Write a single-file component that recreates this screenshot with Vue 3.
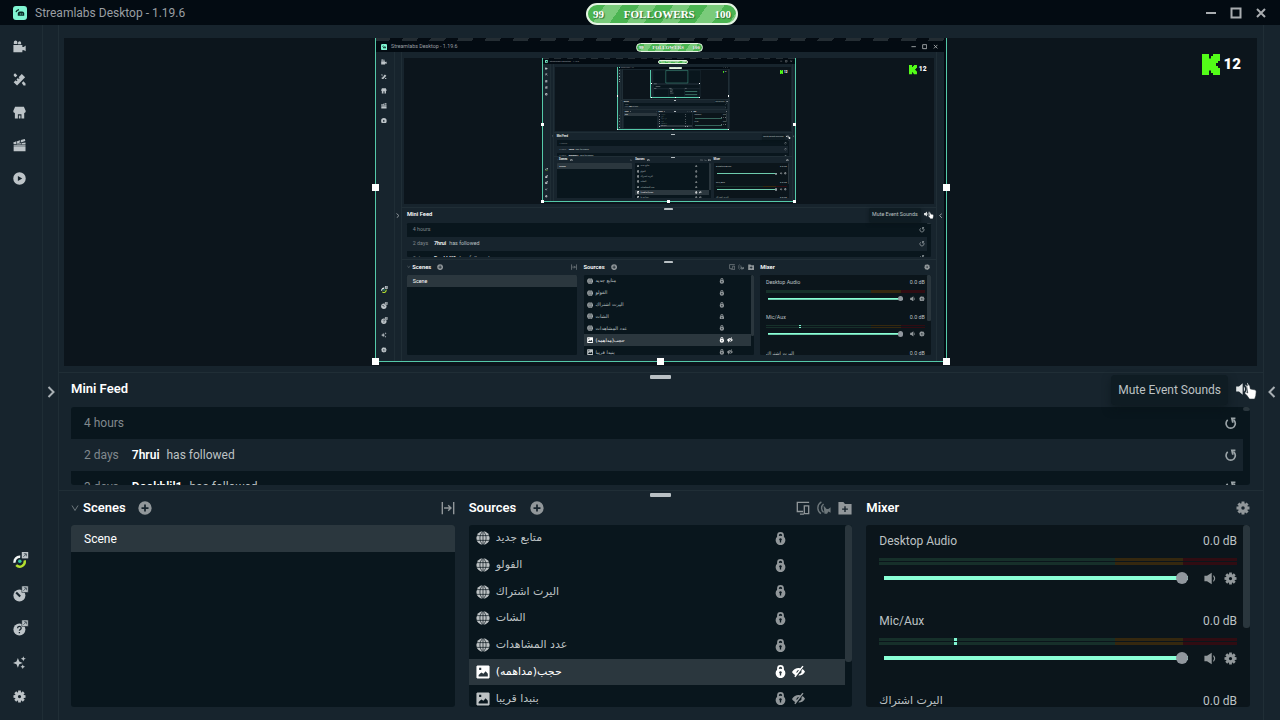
<script setup>
import { computed, ref } from 'vue'

const props = defineProps({
  depth: { type: Number, default: 0 }
})

const MAX_DEPTH = 3
const nested = computed(() => props.depth > 0)
const showCapture = computed(() => props.depth < MAX_DEPTH)

function gearPath() {
  const points = []
  for (let i = 0; i < 8; i++) {
    const a = (i * Math.PI) / 4
    for (const [r, da] of [[5.6, -0.32], [7.6, -0.22], [7.6, 0.22], [5.6, 0.32]]) {
      points.push(`${(8 + r * Math.sin(a + da)).toFixed(2)} ${(8 - r * Math.cos(a + da)).toFixed(2)}`)
    }
  }
  return `M${points.join('L')}ZM8 6a2 2 0 1 0 0 4a2 2 0 0 0 0-4z`
}

const icons = {
  camera: 'M.5 6h11v9.2H.5zM12 9.5l3.6-2.6v7L12 11.6zM1 2.8a2.2 2.2 0 0 1 4.4 0V5H1zM6.2 3.4a1.9 1.9 0 0 1 3.8 0V5.2H6.2zM11 8.500h2v4h-2z',
  tools: 'M.8 11.4 3.4 8.8l1.2 1.2.9-.9-1.2-1.2L6 6.200l1.200 1.200.9-.9L6.900 5.300 10.800 1.200 14.900 5.200 5 15.300zM1 1.600 2.600.4 5.300 3 3.300 5.200 1 3.600zM10.800 12.200l2-2L15.400 13v2.500h-2.400z',
  store: 'M2.600 1h10.800l2.300 5.200c0 1.500-.9 2.300-1.900 2.300V15.300H2.300V8.500C1.200 8.500.3 7.700.3 6.200zM6 15.300h1.200v-3.600h2V15.300h1.200V10H6z',
  clapper: 'M.8 7h14.600v1.400H.8zM.8 8.800h14.600v6.400H.8zM.3 4.200 4.200 2.900 4.200 6.200H.8zM5 2.700 8.700 1.600 8.200 4.700 5 5.700zM9.700 1.300 14.500 0l.7 2.500L9.400 4.300zM5 6.200 9.600 4.900v1.500H5zM10.600 4.800l4.800-.6v2.200h-4.800z',
  play: 'M8 .3a7.700 7.700 0 1 0 0 15.400A7.700 7.700 0 0 0 8 .3zM6 4.800 11.400 8 6 11.200z',
  sparkle: 'M6 2.400 7.700 6.800 12 8.500 7.700 10.200 6 14.600 4.300 10.200 0 8.500 4.300 6.800zM12.700.4l.9 2.200 2.200.9-2.200.9-.9 2.200-.9-2.200-2.200-.9 2.200-.9zM12 10.400l.9 1.900 1.900.9-1.900.9-.9 1.900-.9-1.900-1.900-.9 1.900-.9z',
  gear: gearPath(),
  plus: 'M8 .4a7.600 7.600 0 1 0 0 15.200A7.600 7.600 0 0 0 8 .4zM7 4h2v3h3v2H9v3H7V9H4V7h3z',
  image: 'M1.500.5h13l1 1v13l-1 1h-13l-1-1v-13zM3 13h10.500v-3L11 7 8.500 10 6 8.500 3 11.500zM3.600 3.200v2.400H6V3.200z',
  lock: 'M8 0a4.200 4.200 0 0 1 4.200 4.200v1.600a5.600 5.600 0 0 1 1.800 4.400A6 6 0 0 1 2 10.200a5.600 5.600 0 0 1 1.800-4.400V4.200A4.200 4.200 0 0 1 8 0zM8 2.200a2 2 0 0 0-2 2v.7a6 6 0 0 1 4 0v-.7a2 2 0 0 0-2-2zM8 7.600a1.600 1.600 0 0 0-.8 3v2.200h1.600v-2.200a1.600 1.600 0 0 0-.8-3z',
  hidden: 'M0 8.500C2 5 5 3.600 8 3.600l2.300.3L12.800.8l1.400 1.100L4.200 15l-1.400-1.100 1.300-1.700C2.300 11.400 1 10.200 0 8.500zM8.700 6C6.500 6 5 7.800 5.700 10zM13 5c1.300.7 2.300 1.900 3 3.300-1.900 3.400-5 4.800-8.200 4.700l1.400-1.900c2-.3 3-2 2.300-4z',
  folder: 'M.5 1h5.600L8 3.400h7.500V15.300H.5zM7.200 6v2.500H4.700v1.600h2.500v2.500h1.600v-2.500h2.500V8.500H8.800V6z',
  speaker: 'M.5 4.600h3.200L9.500.8v14.400L3.700 11.400H.5zM11.400 4c3.200 1.700 3.200 6.300 0 8V10.200c1.200-1.100 1.200-3.300 0-4.400z',
  volume: 'M.2 5.200H3.400L7.600 1.500v13L3.400 10.800H.2zM9 5c1.800 1.600 1.800 4.400 0 6zM10.800 2.800c3.400 2.600 3.400 7.800 0 10.400v-1.600c2-2 2-5.200 0-7.200zM12.600.8c4.600 3.600 4.600 10.800 0 14.400v-1.500c3.400-3.400 3.400-8 0-11.400z'
}

const topNav = [
  { icon: 'camera', label: 'Editor' },
  { icon: 'tools', label: 'Themes' },
  { icon: 'store', label: 'App Store' },
  { icon: 'clapper', label: 'Highlighter' },
  { icon: 'play', label: 'Recordings' }
]

const feed = [
  { time: '4 hours', name: '', action: '' },
  { time: '2 days', name: '7hrui', action: 'has followed' },
  { time: '3 days', name: 'Dookhlil1', action: 'has followed' }
]

const sources = [
  { name: 'متابع جديد', icon: 'globe' },
  { name: 'الفولو', icon: 'globe' },
  { name: 'اليرت اشتراك', icon: 'globe' },
  { name: 'الشات', icon: 'globe' },
  { name: 'عدد المشاهدات', icon: 'globe' },
  { name: 'حجب(مداهمه)', icon: 'image', hidden: true, active: true },
  { name: 'بنبدا قريبا', icon: 'image', hidden: true }
]

const channels = ref([
  { id: 'desktop', name: 'Desktop Audio', volume: 100, peak: null },
  { id: 'mic', name: 'Mic/Aux', volume: 100, peak: 21 },
  { id: 'alert', name: 'اليرت اشتراك', volume: 100, peak: null, rtl: true }
])
</script>

<template>
  <div class="window" :class="{ nested }">
    <header class="titlebar">
      <svg class="logo" viewBox="0 0 14 14" aria-hidden="true">
        <rect width="14" height="14" rx="3" fill="#80f5d2" />
        <path d="M3 6.200a3.500 3.500 0 0 1 3-2.600" fill="none" stroke="#0a2a26" stroke-width="1.300" />
        <path d="M4.800 9.800V7.600a2 2 0 0 1 2-2h2.400a2 2 0 0 1 2 2v2.200z" fill="#0a2a26" />
        <path d="M7.300 7.400v1.200M9.200 7.400v1.200" stroke="#80f5d2" stroke-width=".9" />
      </svg>
      <span class="title">Streamlabs Desktop - 1.19.6</span>
      <div class="goal"><span>99</span><b>FOLLOWERS</b><span>100</span></div>
      <div class="controls">
        <button aria-label="Minimize"><svg viewBox="0 0 12 12"><path d="M1 6h10" /></svg></button>
        <button aria-label="Maximize"><svg viewBox="0 0 12 12"><path d="M1.500 1.500h9v9h-9z" /></svg></button>
        <button aria-label="Close"><svg viewBox="0 0 12 12"><path d="M2 2l8 8M10 2l-8 8" /></svg></button>
      </div>
    </header>

    <div class="body">
      <nav class="nav">
        <div class="nav-top">
          <button v-for="item in topNav" :key="item.icon" :aria-label="item.label">
            <svg class="icon" viewBox="0 0 16 16"><path :d="icons[item.icon]" :fill-rule="item.icon === 'camera' ? 'nonzero' : 'evenodd'" /></svg>
          </button>
        </div>
        <div class="nav-bottom">
          <button aria-label="Cloudbot">
            <svg class="icon wide" viewBox="0 0 20 20">
              <path d="M2 13.500A6.500 6.500 0 0 1 9 6" fill="none" stroke="#f2f6f5" stroke-width="3" />
              <path d="M4 16.500A6.300 6.300 0 0 0 14.500 10.500" fill="none" stroke="#b4e02f" stroke-width="3" />
              <circle cx="8.500" cy="11.500" r="2.200" fill="#31c3a2" />
              <path d="M11 0h8v8h-8z" /><path class="cut" d="M13 6l3.500-3.500M13.500 2.200h3.200v3.200" />
            </svg>
          </button>
          <button aria-label="Dashboard">
            <svg class="icon wide" viewBox="0 0 20 20">
              <circle cx="8" cy="12" r="7.500" /><path d="M4 8l5 5" stroke="#17242d" stroke-width="2.600" />
              <path d="M11 0h8v8h-8z" stroke="#17242d" stroke-width=".7" /><path class="cut" d="M13 6l3.500-3.500M13.500 2.200h3.200v3.200" />
            </svg>
          </button>
          <button aria-label="Get Help">
            <svg class="icon wide" viewBox="0 0 20 20">
              <circle cx="8" cy="12" r="7.500" /><path d="M5.800 10.200c0-3 4.600-2.800 4.400 0 0 1.600-2.200 1.600-2.200 3.200M8 15v1.700" fill="none" stroke="#17242d" stroke-width="1.600" />
              <path d="M11 0h8v8h-8z" stroke="#17242d" stroke-width=".7" /><path class="cut" d="M13 6l3.500-3.500M13.500 2.200h3.200v3.200" />
            </svg>
          </button>
          <button aria-label="Get Prime"><svg class="icon" viewBox="0 0 16 16"><path :d="icons.sparkle" /></svg></button>
          <button aria-label="Settings"><svg class="icon" viewBox="0 0 16 16"><path :d="icons.gear" fill-rule="evenodd" /></svg></button>
        </div>
      </nav>

      <aside class="dock">
        <button aria-label="Expand left dock"><svg viewBox="0 0 8 12"><path d="M1.500 1l5 5-5 5" /></svg></button>
      </aside>

      <main class="main">
        <div class="stage">
          <div class="source">
            <div class="overscan"></div>
            <div v-if="showCapture" class="capture" inert>
              <App :depth="depth + 1" />
            </div>
            <svg v-else class="thumbnail" viewBox="0 0 128 72" aria-hidden="true">
              <path d="M0 0h128v72H0z" fill="#17242d" />
              <path d="M6 4h120v32H6zM7 41h118v8H7zM7 52h38v19H7zM47 52h38v19H47zM87 52h38v19H87z" fill="#09161d" />
              <path d="M38 4h57v32H38z" fill="none" stroke="#55c9a9" />
              <path d="M7 38h8M12 45h12M8 50h6M47 50h6M49 54h8M49 58h6M49 62h9M87 50h5" stroke="#bdc2c4" />
              <path d="M88 58h31M88 66h31" stroke="#8affd6" />
              <path d="M58 1h16" stroke="#7acb7b" stroke-width="2" />
            </svg>
            <i class="handle left middle"></i>
            <i class="handle right middle"></i>
            <i class="handle left bottom"></i>
            <i class="handle center bottom"></i>
            <i class="handle right bottom"></i>
          </div>
          <div class="viewers">
            <svg viewBox="0 0 18 21" aria-hidden="true"><path d="M0 0h7v4.500h2V2h2V0h7v7h-2v2h-2v3h2v2h2v7h-7v-2H9v-2.500H7V21H0z" fill="#53fc18" /></svg>
            <b>12</b>
          </div>
        </div>

        <section class="feed-section">
          <span class="grip"></span>
          <div class="feed-head">
            <h2>Mini Feed</h2>
            <button class="mute" aria-label="Mute Event Sounds"><svg viewBox="0 0 16 16"><path :d="icons.volume" /></svg></button>
            <span class="tooltip">Mute Event Sounds</span>
            <svg class="pointer" viewBox="0 0 13 17" aria-hidden="true">
              <path d="M3.500 1.200c1-.6 2 0 2.200 1l.6 3 4.500 1c1.200.3 1.800 1 1.700 2.200l-.4 4-1.200 3.600H5.400L3 12.600.6 10c-.4-1 .8-1.900 1.800-1.200l1.200.8-1-6.800c-.1-.7.300-1.300.9-1.600z" fill="#fff" stroke="#2a353b" stroke-width=".6" />
            </svg>
          </div>
          <div class="feed">
            <ul>
              <li v-for="event in feed" :key="event.time">
                <span class="time">{{ event.time }}</span>
                <b>{{ event.name }}</b>
                <span>{{ event.action }}</span>
                <button aria-label="Replay alert">
                  <svg viewBox="0 0 14 14"><path d="M4 3.200A5 5 0 1 0 10.400 3.200" fill="none" stroke="currentColor" stroke-width="1.800" /><path d="M7.300.6h5v1.700l-2 .2 0 3.600-1.700 0z" /></svg>
                </button>
              </li>
            </ul>
            <span class="thumb"></span>
          </div>
        </section>

        <section class="docks">
          <span class="grip"></span>
          <div class="panel">
            <div class="panel-head scenes-head">
              <svg class="caret" viewBox="0 0 8 8"><path d="M1 1.500l3 5 3-5" /></svg>
              <h2>Scenes</h2>
              <button class="add" aria-label="Add scene"><svg viewBox="0 0 16 16"><path :d="icons.plus" fill-rule="evenodd" /></svg></button>
              <button class="push" aria-label="Scene transitions">
                <svg viewBox="0 0 16 16"><path d="M1.500 1v14M14.500 1v14M3.500 8h7.500M8.200 4.800 11.400 8 8.200 11.200" fill="none" stroke="currentColor" stroke-width="1.600" /></svg>
              </button>
            </div>
            <div class="box">
              <ul class="scenes"><li>Scene</li></ul>
            </div>
          </div>

          <div class="panel">
            <div class="panel-head">
              <h2>Sources</h2>
              <button class="add" aria-label="Add source"><svg viewBox="0 0 16 16"><path :d="icons.plus" fill-rule="evenodd" /></svg></button>
              <button class="push" aria-label="Dual output">
                <svg viewBox="0 0 16 16"><path d="M8 12H1.500V1.500H15M4.500 15H9M9.500 5.500h5v9h-5z" fill="none" stroke="currentColor" stroke-width="1.500" /></svg>
              </button>
              <button class="dim" aria-label="Selective recording">
                <svg viewBox="0 0 16 16"><path d="M5 1C0 4-.5 11 4.500 14.500M7.500 3.500C4.500 6 4.500 10 7.500 13" fill="none" stroke="currentColor" stroke-width="1.600" /><path d="M7.500 5l3.500 4 2 0 2.500-2v6.500l-2.500-1.500-1.500 2.500H8.500z" /></svg>
              </button>
              <button aria-label="Add group"><svg viewBox="0 0 16 16"><path :d="icons.folder" fill-rule="evenodd" /></svg></button>
            </div>
            <div class="box">
              <ul class="sources">
                <li v-for="source in sources" :key="source.name" :class="{ active: source.active }">
                  <svg v-if="source.icon === 'globe'" viewBox="0 0 16 16">
                    <circle cx="8" cy="8" r="7.600" />
                    <path class="meridians" d="M8 0v16M.5 5.300h15M.5 10.700h15M8 .2C3.300 4 3.300 12 8 15.800M8 .2c4.700 3.800 4.700 11.800 0 15.600" />
                  </svg>
                  <svg v-else viewBox="0 0 16 16"><path :d="icons.image" fill-rule="evenodd" /></svg>
                  <bdi class="arabic">{{ source.name }}</bdi>
                  <span class="flags">
                    <button :aria-label="'Unlock ' + source.name"><svg viewBox="0 0 16 16"><path :d="icons.lock" fill-rule="evenodd" /></svg></button>
                    <button v-if="source.hidden" :aria-label="'Show ' + source.name"><svg viewBox="0 0 16 16"><path :d="icons.hidden" fill-rule="evenodd" /></svg></button>
                  </span>
                </li>
              </ul>
              <span class="thumb"></span>
            </div>
          </div>

          <div class="panel">
            <div class="panel-head">
              <h2>Mixer</h2>
              <button class="push" aria-label="Advanced audio settings"><svg viewBox="0 0 16 16"><path :d="icons.gear" fill-rule="evenodd" /></svg></button>
            </div>
            <div class="box mixer">
              <div class="channels">
                <div v-for="channel in channels" :key="channel.id" class="channel">
                  <div class="channel-name">
                    <label :for="`${channel.id}-${depth}`" :class="{ arabic: channel.rtl }">{{ channel.name }}</label>
                    <span>0.0 dB</span>
                  </div>
                  <div class="meter">
                    <i></i><i></i>
                    <span v-if="channel.peak" class="peak" :style="{ left: channel.peak + '%' }"></span>
                  </div>
                  <div class="volume">
                    <input :id="`${channel.id}-${depth}`" v-model="channel.volume" type="range" min="0" max="100" />
                    <button :aria-label="'Mute ' + channel.name"><svg viewBox="0 0 16 16"><path :d="icons.speaker" /></svg></button>
                    <button :aria-label="'Settings for ' + channel.name"><svg viewBox="0 0 16 16"><path :d="icons.gear" fill-rule="evenodd" /></svg></button>
                  </div>
                </div>
              </div>
              <span class="thumb"></span>
            </div>
          </div>
        </section>
      </main>

      <aside class="dock end">
        <button aria-label="Expand right dock"><svg viewBox="0 0 8 12"><path d="M6.500 1l-5 5 5 5" /></svg></button>
      </aside>
    </div>
  </div>
</template>

<style>
body {
  background: #17242d;
  overflow: hidden;
}
</style>

<style scoped>
.window {
  display: flex;
  flex-direction: column;
  width: 100%;
  height: 100vh;
  overflow: hidden;
  position: relative;
  box-sizing: border-box;
  background: #17242d;
  color: #bdc2c4;
  font: 12px/16px Roboto, "DejaVu Sans", sans-serif;
}
.window.nested { height: 100%; }
.window * { box-sizing: border-box; }
button {
  display: flex;
  align-items: center;
  justify-content: center;
  padding: 0;
  border: 0;
  background: none;
  color: inherit;
  font: inherit;
}
svg { display: block; fill: currentColor; flex: none; }
ul { list-style: none; margin: 0; padding: 0; }
h2 { margin: 0; color: #fff; font-size: 13px; line-height: 16px; font-weight: 600; }

.titlebar {
  display: flex;
  align-items: center;
  flex: none;
  height: 25px;
  padding: 0 13px;
  background: #030b12;
}
.logo { width: 14px; height: 14px; margin-right: 8px; }
.title { color: #9a9fa3; }
.goal {
  position: absolute;
  left: 586px;
  top: 3px;
  display: flex;
  align-items: center;
  justify-content: space-between;
  width: 152px;
  height: 22px;
  padding: 0 5px;
  border: 2px solid #e4f5e2;
  border-radius: 11px;
  background: repeating-linear-gradient(125deg, #4bb552 0 14px, #7acb7b 14px 28px);
  color: #fff;
  font: bold 11px/16px "Liberation Serif", serif;
  text-shadow: 1px 1px 1px #2c6b31;
}
.controls { display: flex; gap: 13px; margin-left: auto; }
.controls svg { width: 12px; height: 12px; fill: none; stroke: #a9adb0; stroke-width: 2; }

.body { display: flex; flex: 1; min-height: 0; }
.nav {
  display: flex;
  flex-direction: column;
  justify-content: space-between;
  width: 43px;
  padding: 5px 0 7px;
  border-right: 1px solid #1f2d35;
  color: #bdc4c8;
}
.nav button { width: 38px; height: 33px; }
.nav-bottom button { height: 34px; }
.icon { width: 13px; height: 13px; }
.icon.wide { width: 16px; height: 16px; margin-left: 3px; }
.cut { fill: none; stroke: #34434b; stroke-width: 1; }
.dock {
  display: flex;
  align-items: center;
  justify-content: center;
  width: 16px;
  padding-top: 39px;
  border-right: 1px solid #202e36;
}
.dock.end { width: 17px; border-right: 0; border-left: 1px solid #202e36; }
.dock svg { width: 8px; height: 12px; fill: none; stroke: #a9b0b4; stroke-width: 2; }

.main { display: flex; flex-direction: column; flex: 1; min-width: 0; }
.stage {
  display: flex;
  justify-content: center;
  flex: 1;
  min-height: 0;
  position: relative;
  overflow: hidden;
  margin: 13px 6px 6px 5px;
  background: #0c151c;
}
.source {
  display: flex;
  flex-direction: column;
  justify-content: flex-end;
  flex: none;
  position: relative;
  width: 572px;
  height: 348px;
  margin-top: -24px;
  border: 1px solid #55c9a9;
  background: #040b12;
}
.overscan {
  height: 4px;
  background: repeating-linear-gradient(120deg, #242d33 0 13px, #040b12 13px 24px);
}
.capture { width: 1280px; height: 720px; zoom: 0.444; overflow: hidden; }
.thumbnail { width: 568px; height: 320px; }
.handle { position: absolute; width: 7px; height: 7px; background: #fff; }
.handle.left { left: -4px; }
.handle.center { left: calc(50% - 4px); }
.handle.right { right: -4px; }
.handle.middle { top: calc(50% - 4px); }
.handle.bottom { bottom: -4px; }
.viewers {
  position: absolute;
  top: 16px;
  right: 16px;
  display: flex;
  align-items: center;
  gap: 4px;
  color: #fff;
  font: 900 15px/21px Roboto, sans-serif;
}
.viewers b { font-weight: 900; }
.viewers svg { width: 18px; height: 21px; }

.grip {
  position: absolute;
  left: calc(50% - 11px);
  top: 2px;
  width: 21px;
  height: 4px;
  border-radius: 1px;
  background: #b9c0c4;
}
.feed-section {
  position: relative;
  flex: none;
  height: 118px;
  padding: 8px 13px 0 12px;
  border-top: 1px solid #202e36;
}
.feed-head { display: flex; align-items: center; justify-content: space-between; position: relative; height: 16px; }
.mute svg { width: 14px; height: 14px; color: #e3e7e8; }
.tooltip {
  position: absolute;
  right: 22px;
  top: -6px;
  padding: 7px;
  border-radius: 4px;
  background: #0f1c23;
  box-shadow: 0 4px 8px #07121788;
  z-index: 1;
}
.pointer { position: absolute; right: -7px; top: 3px; width: 13px; height: 16px; z-index: 2; }
.feed {
  position: relative;
  height: 78px;
  margin-top: 10px;
  padding-right: 7px;
  overflow: hidden;
  border-radius: 3px;
  background: #09161d;
}
.feed li { display: flex; align-items: center; height: 32px; padding: 0 6px 0 13px; }
.feed li:nth-child(even) { background: #17242d; }
.feed b { margin: 0 7px 0 13px; color: #fff; font-weight: 600; }
.feed .time { color: #81898d; }
.feed button { margin-left: auto; color: #9aa3a7; }
.feed button svg { width: 13px; height: 13px; }
.thumb { position: absolute; top: 0; right: 0; width: 7px; border-radius: 3px; background: #2a363d; }
.feed .thumb { height: 4px; }

.docks {
  position: relative;
  display: grid;
  grid-template-columns: repeat(3, minmax(0, 1fr));
  grid-template-rows: minmax(0, 1fr);
  gap: 14px;
  flex: none;
  height: 230px;
  padding: 8px 13px 13px 12px;
  border-top: 1px solid #202e36;
}
.panel { display: flex; flex-direction: column; min-width: 0; min-height: 0; }
.panel-head { display: flex; align-items: center; gap: 7px; height: 17px; color: #91979a; }
.panel-head button svg { width: 14px; height: 14px; }
.panel-head .add { margin-left: 7px; }
.panel-head .push { margin-left: auto; }
.panel-head .dim { color: #6d777b; }
.scenes-head { gap: 4px; }
.scenes-head .add { margin-left: 8px; }
.caret { width: 8px; height: 8px; fill: none; stroke: #6d777c; stroke-width: 1; }
.box {
  position: relative;
  flex: 1;
  min-height: 0;
  margin-top: 9px;
  overflow: hidden;
  border-radius: 3px;
  background: #09161d;
}
.scenes li { height: 27px; padding: 6px 13px; background: #2b373e; color: #fff; }
.sources { display: grid; grid-template-rows: repeat(7, 1fr); height: 187px; margin-right: 7px; }
.sources li { display: flex; align-items: center; gap: 6px; padding-left: 7px; }
.sources li > svg { width: 14px; height: 14px; }
.sources li.active { background: #2b373e; color: #fff; }
.meridians { fill: none; stroke: #09161d; stroke-width: 0.8; }
.arabic { font-family: "DejaVu Sans", sans-serif; font-size: 11px; }
.flags { display: flex; gap: 5px; width: 71px; margin-left: auto; color: #91979a; }
.flags svg { width: 13px; height: 13px; }
.active .flags { color: #fff; }
.sources + .thumb { height: 137px; }
.mixer { padding-right: 7px; background: #0b151b; }
.mixer .thumb { height: 103px; }
.channel { height: 80px; padding: 8px 6px 0 13px; }
.channel-name { display: flex; justify-content: space-between; }
.meter { position: relative; display: grid; gap: 1px; margin-top: 9px; }
.meter i {
  height: 3px;
  background: linear-gradient(90deg, #16302a 0 66%, #35280f 66% 85%, #300c12 85%);
}
.peak {
  position: absolute;
  top: 0;
  width: 3px;
  height: 7px;
  background: linear-gradient(#80f5d2 0 3px, #0b151b 3px 4px, #80f5d2 4px);
}
.volume { display: flex; align-items: center; gap: 7px; height: 16px; margin-top: 5px; }
.volume button { color: #91979a; }
.volume svg { width: 13px; height: 13px; }
.volume input {
  appearance: none;
  flex: 1;
  min-width: 0;
  height: 12px;
  margin: 0 9px 0 5px;
  background: linear-gradient(#8affd6, #8affd6) left center / 100% 4px no-repeat;
}
.volume input::-webkit-slider-thumb {
  appearance: none;
  width: 12px;
  height: 12px;
  border-radius: 50%;
  background: #91979e;
}
</style>
